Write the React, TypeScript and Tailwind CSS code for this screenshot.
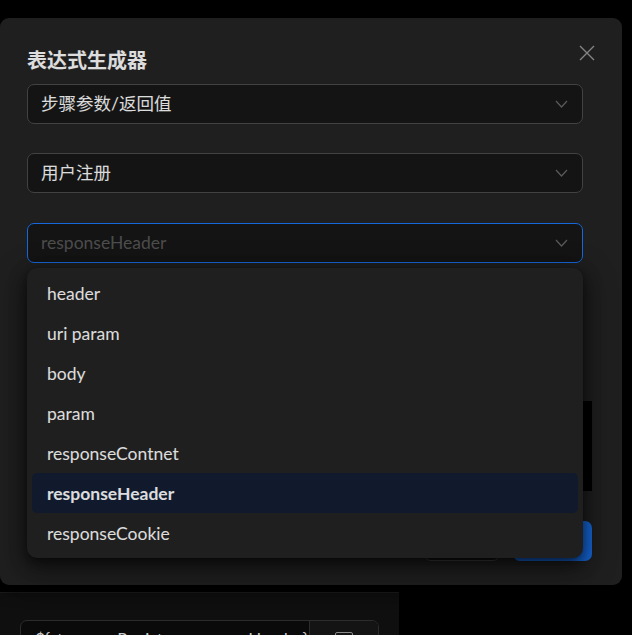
const items = [
  "header",
  "uri param",
  "body",
  "param",
  "responseContnet",
  "responseHeader",
  "responseCookie",
];

const Chevron = () => (
  <svg width="13" height="8" viewBox="0 0 13 8" fill="none" className="shrink-0">
    <path d="M1 1l5.5 6L12 1" stroke="rgba(255,255,255,0.3)" strokeWidth="1.2" />
  </svg>
);

const Select = ({ value, placeholder, active }: { value?: string; placeholder?: string; active?: boolean }) => (
  <div
    className={`flex h-[40px] w-[556px] items-center justify-between rounded-[7px] border bg-[#141414] pl-[13px] pr-[14px] ${
      active ? "border-[#1668dc]" : "border-[#424242]"
    }`}
  >
    {value ? (
      <span className="text-[17.5px] text-white/85">{value}</span>
    ) : (
      <span className="text-[17.5px] text-white/25">{placeholder}</span>
    )}
    <Chevron />
  </div>
);

export default function App() {
  return (
    <div className="relative h-[635px] w-[632px] overflow-hidden bg-black font-['Lato','Noto_Sans_CJK_SC',sans-serif]">
      {/* page behind the modal */}
      <div className="flex h-full flex-col">
        <div className="h-[592px] shrink-0" />
        <div className="w-[399px] flex-1 border-t border-[#1b1b1b] bg-[#0f0f0f] px-[20px] pt-[27px]">
          <div className="flex h-[48px] overflow-hidden rounded-[7px] border border-[#2c2c2c] bg-[#0a0a0a]">
            <div className="min-w-0 flex-1 overflow-hidden whitespace-nowrap px-[14px] pt-[7px] text-[17px] leading-[24px] text-[#c8c8c8]">
              ${"{"}step.userRegister.responseHeader{"}"}
            </div>
            <div className="flex w-[69px] shrink-0 justify-center border-l border-[#2c2c2c] bg-[#141414] pt-[11px]">
              <div className="h-[16px] w-[18px] rounded-[2px] border border-[#8a8a8a]" />
            </div>
          </div>
        </div>
      </div>

      {/* modal */}
      <div className="absolute inset-0">
        <div className="relative mt-[18px] flex h-[567px] w-[622px] flex-col rounded-[9px] bg-[#1f1f1f] pl-[27px] pr-[30px] pt-[27px] shadow-[0_6px_16px_rgba(0,0,0,0.4)]">
          <button className="absolute right-[21px] top-[21px] flex h-[28px] w-[28px] items-center justify-center">
            <svg width="16" height="16" viewBox="0 0 16 16" fill="none">
              <path d="M1 1l14 14M15 1L1 15" stroke="rgba(255,255,255,0.45)" strokeWidth="1.4" />
            </svg>
          </button>
          <div className="h-[30px] font-['Noto_Sans_CJK_SC',sans-serif] text-[20px] font-bold leading-[30px] text-white/85">
            表达式生成器
          </div>
          <div className="mt-[9px] flex flex-col gap-[29px]">
            <Select value="步骤参数/返回值" />
            <Select value="用户注册" />
            <div className="relative z-10 mt-[1px]">
              <Select placeholder="responseHeader" active />
              <div className="absolute left-0 top-[45px] w-[556px] rounded-[10px] bg-[#1f1f1f] p-[5px] shadow-[0_6px_16px_rgba(0,0,0,0.5),0_3px_6px_-4px_rgba(0,0,0,0.6),0_9px_28px_8px_rgba(0,0,0,0.3)]">
                {items.map((it) => (
                  <div
                    key={it}
                    className={`flex h-[40px] items-center rounded-[5px] px-[15px] pt-[2px] text-[17.5px] text-white/85 ${
                      it === "responseHeader" ? "bg-[#111a2c] font-bold" : ""
                    }`}
                  >
                    {it}
                  </div>
                ))}
              </div>
            </div>
          </div>
          <div className="mt-[138px] h-[90px] w-full bg-black" />
          <div className="mt-[30px] flex justify-end gap-[13px]">
            <button className="h-[40px] w-[76px] rounded-[7px] border border-[#424242] bg-[#141414]" />
            <button className="h-[40px] w-[79px] rounded-[7px] bg-[#1668dc]" />
          </div>
        </div>
      </div>
    </div>
  );
}
